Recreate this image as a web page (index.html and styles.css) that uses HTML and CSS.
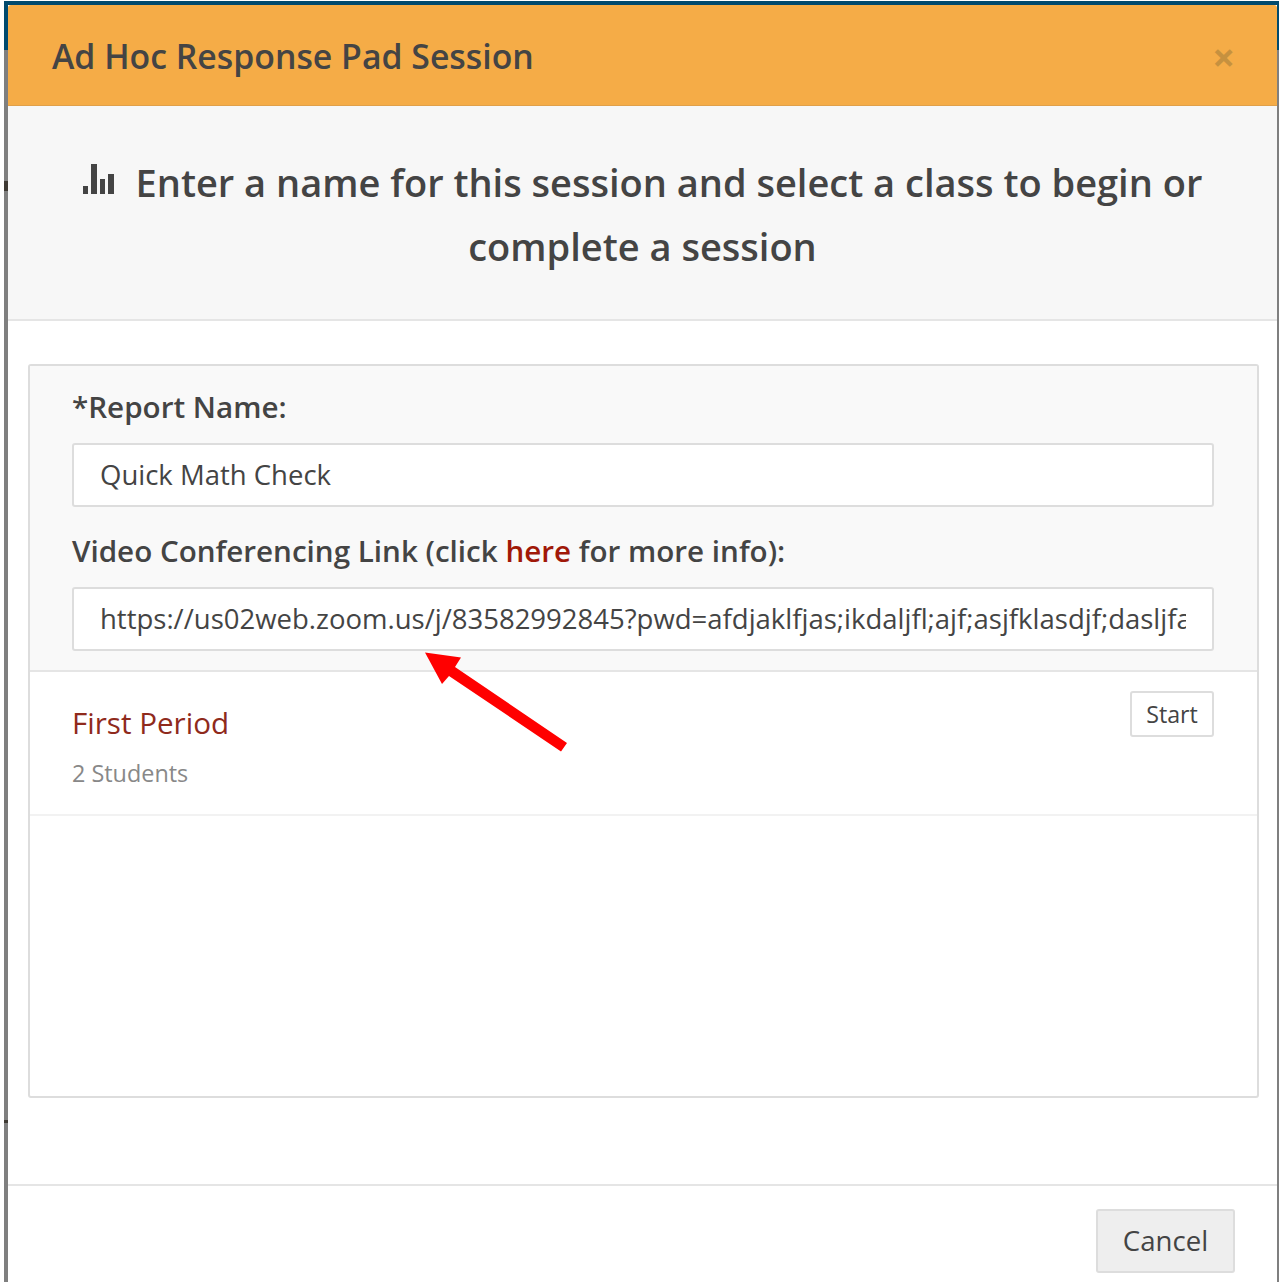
FILE: index.html
```html
<!DOCTYPE html>
<html>
<head>
  <meta charset="utf-8">
  <title>Ad Hoc Response Pad Session</title>
  <link rel="stylesheet" href="styles.css">
</head>
<body>
  <div class="backdrop">
    <div class="modal">
      <div class="modal-header">
        <h1>Ad Hoc Response Pad Session</h1>
        <span class="close">&times;</span>
      </div>

      <div class="modal-intro">
        <svg class="bars-icon" width="32" height="30" viewBox="0 0 32 30">
          <rect x="0" y="22" width="5" height="8" fill="#444"></rect>
          <rect x="8" y="0" width="6" height="30" fill="#444"></rect>
          <rect x="17" y="15" width="5" height="15" fill="#444"></rect>
          <rect x="25" y="10" width="6" height="20" fill="#444"></rect>
        </svg>
        Enter a name for this session and select a class to begin or complete a session
      </div>

      <div class="modal-body">
        <div class="panel">
          <div class="panel-form">
            <label class="field-label">*Report Name:</label>
            <input class="field-input" type="text" value="Quick Math Check">
            <label class="field-label">Video Conferencing Link (click <a class="info-link">here</a> for more info):</label>
            <input class="field-input" type="text" value="https://us02web.zoom.us/j/83582992845?pwd=afdjaklfjas;ikdaljfl;ajf;asjfklasdjf;dasljfasdfkl">
          </div>
          <div class="class-row">
            <div>
              <div class="class-name">First Period</div>
              <div class="class-count">2 Students</div>
            </div>
            <button class="start-btn">Start</button>
          </div>
        </div>
      </div>

      <div class="modal-footer">
        <button class="cancel-btn">Cancel</button>
      </div>

      <!-- annotation arrow on top of the screenshot -->
      <svg class="arrow" width="1282" height="1282" viewBox="0 0 1282 1282">
        <polygon points="425,652.5 461,657.5 455,667 567,743 561,751.5 449,676 442,684" fill="#ff0000"></polygon>
      </svg>
    </div>
  </div>
</body>
</html>
```

FILE: styles.css
```css
* {
  box-sizing: border-box;
}
html, body {
  height: 100%;
}
body {
  margin: 0;
  background-color: #fff;
  font-family: "Open Sans", Arial, sans-serif;
  color: #444;
  overflow: hidden;
}
/* dimmed page behind the modal, only a sliver of it shows */
.backdrop {
  height: 1282px;
  margin: 1px 3px 0 4px;
  padding: 4px 2px 0 4px;
  background:
    linear-gradient(#7f7f7f, #7f7f7f) right 49px / 2px 100% no-repeat,
    linear-gradient(#004a6e 0, #004a6e 49px,
      #7f7f7f 49px, #7f7f7f 180px,
      #3f3a34 180px, #3f3a34 190px,
      #7f7f7f 190px, #7f7f7f 1119px,
      #3f3a34 1119px, #3f3a34 1122px,
      #7f7f7f 1122px);
}
.modal {
  position: relative;
  height: 1277px;
  background-color: #fff;
}
.modal-header {
  height: 101px;
  padding: 1px 44px 0;
  display: flex;
  align-items: center;
  justify-content: space-between;
  background-color: #f5ac47;
  border-bottom: 1px solid #e0a04a;
  border-radius: 3px 3px 0 0;
}
.modal-header h1 {
  margin: 0;
  font-size: 33.8px;
  font-weight: 600;
  color: #444;
}
.close {
  font-size: 40px;
  font-weight: 700;
  line-height: 1;
  margin-top: 2px;
  margin-right: -2px;
  color: #c6913f;
}
.modal-intro {
  height: 215px;
  padding: 44px 60px 0;
  background-color: #f7f7f7;
  border-bottom: 2px solid #e5e5e5;
  text-align: center;
  font-size: 38px;
  font-weight: 600;
  line-height: 64px;
}
.bars-icon {
  margin-right: 11px;
  vertical-align: 3px;
}
.modal-body {
  height: 865px;
  padding: 43px 18px 0 20px;
  border-bottom: 2px solid #e5e5e5;
}
.panel {
  height: 734px;
  border: 2px solid #ddd;
  border-radius: 3px;
}
.panel-form {
  height: 306px;
  padding: 20px 43px 0 42px;
  background-color: #f9f9f9;
  border-bottom: 2px solid #e5e5e5;
}
.field-label {
  display: block;
  font-size: 29.6px;
  font-weight: 600;
  line-height: 44px;
  margin-bottom: 14px;
  margin-top: -1px;
}
.field-input {
  display: block;
  width: 100%;
  height: 64px;
  margin-bottom: 23px;
  padding: 0 26px 2px;
  border: 2px solid #ddd;
  border-radius: 3px;
  background-color: #fff;
  font-family: inherit;
  font-size: 27.5px;
  color: #444;
}
.info-link {
  color: #a01808;
}
.class-row {
  height: 144px;
  padding: 19px 43px 0 42px;
  display: flex;
  justify-content: space-between;
  align-items: flex-start;
  border-bottom: 2px solid #f2f2f2;
}
.class-name {
  margin-top: 12px;
  font-size: 29.6px;
  line-height: 40px;
  color: #8f2a1c;
}
.class-count {
  margin-top: 10px;
  font-size: 23.4px;
  line-height: 40px;
  color: #888;
}
.start-btn {
  width: 84px;
  height: 46px;
  padding: 0;
  background-color: #fff;
  border: 2px solid #ddd;
  border-radius: 3px;
  font-family: inherit;
  font-size: 23.2px;
  color: #444;
}
.modal-footer {
  padding: 23px 42px 0 0;
  display: flex;
  justify-content: flex-end;
}
.cancel-btn {
  width: 139px;
  height: 64px;
  padding: 0 0 2px;
  background-color: #eee;
  border: 2px solid #ddd;
  border-radius: 3px;
  font-family: inherit;
  font-size: 27.6px;
  color: #444;
}
.arrow {
  position: absolute;
  left: -8px;
  top: -5px;
  pointer-events: none;
}
```
